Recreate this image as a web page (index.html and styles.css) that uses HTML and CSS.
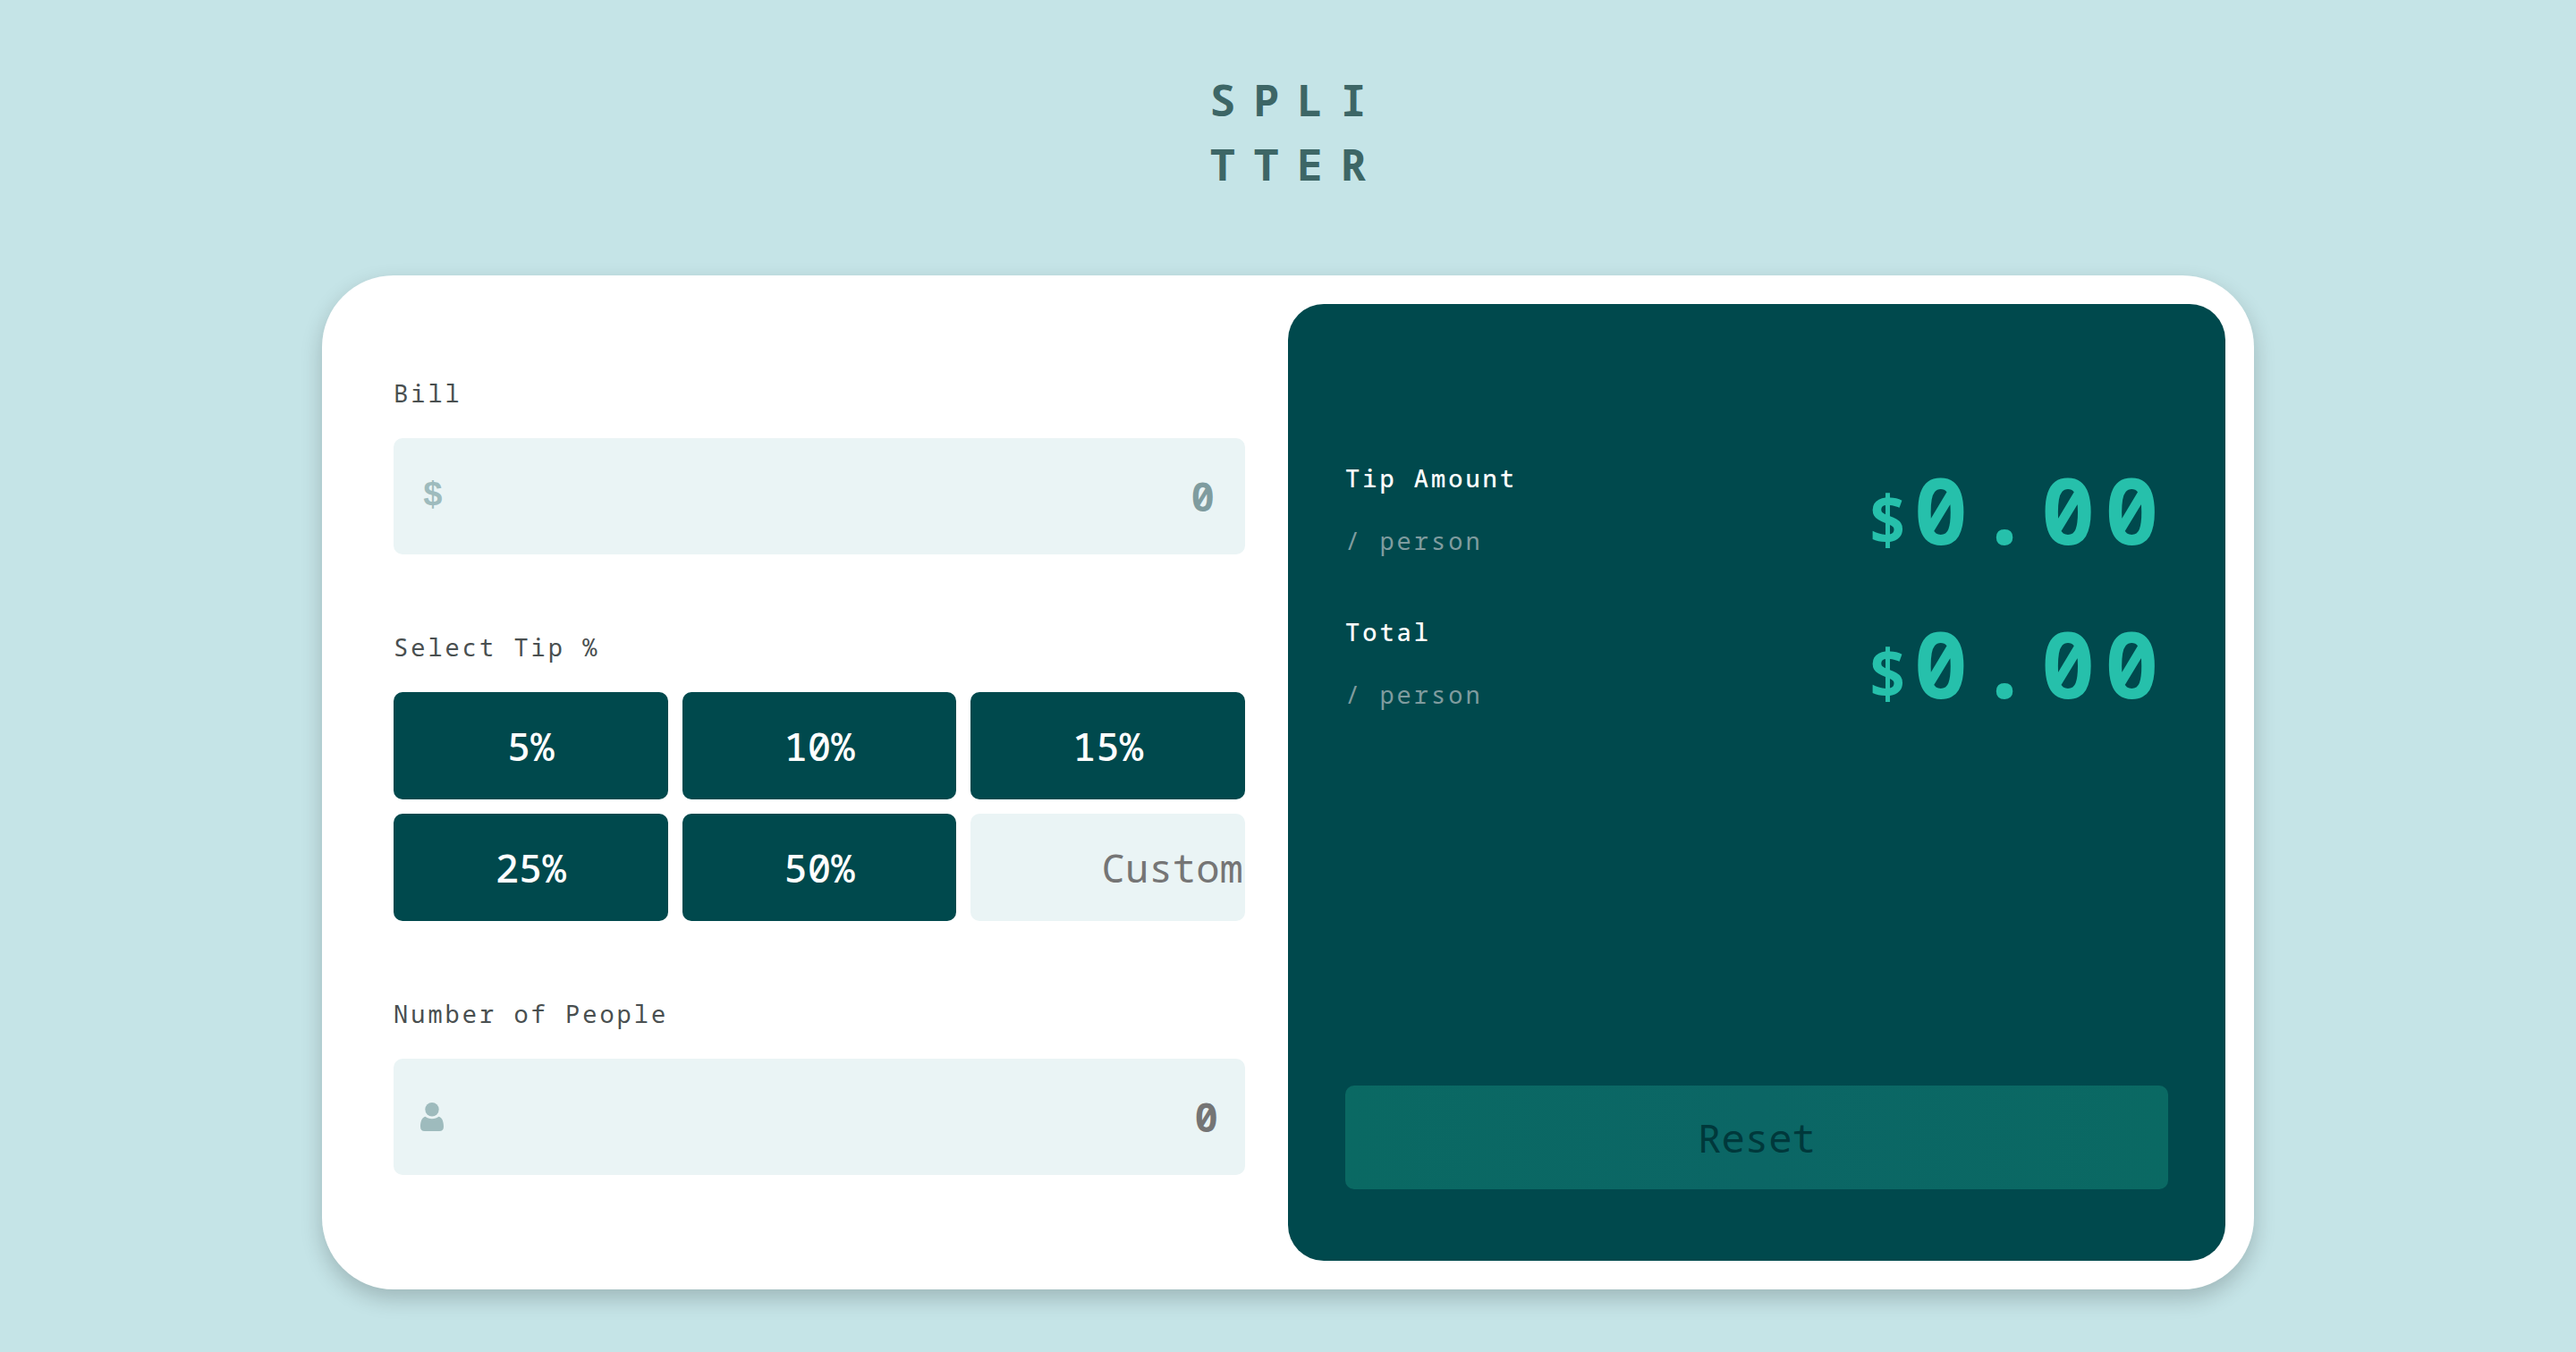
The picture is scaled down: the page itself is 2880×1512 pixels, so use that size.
FILE: index.html
```html
<!DOCTYPE html>
<html lang="en">
<head>
<meta charset="utf-8">
<meta name="viewport" content="width=device-width, initial-scale=1">
<title>Splitter</title>
<link rel="stylesheet" href="styles.css">
</head>
<body>
<header class="header">
  <h1 class="logo">SPLI<br>TTER</h1>
</header>
<main class="card">
  <form class="form">
    <div class="group">
      <label class="label" for="bill">Bill</label>
      <div class="field field-money">
        <span class="dollar" aria-hidden="true">$</span>
        <input class="input" id="bill" type="text" inputmode="decimal" value="0">
      </div>
    </div>
    <fieldset class="group tips">
      <legend class="label">Select Tip %</legend>
      <div class="tip-grid">
        <button class="tip" type="button">5%</button>
        <button class="tip" type="button">10%</button>
        <button class="tip" type="button">15%</button>
        <button class="tip" type="button">25%</button>
        <button class="tip" type="button">50%</button>
        <input class="custom" type="text" inputmode="numeric" placeholder="Custom" aria-label="Custom tip">
      </div>
    </fieldset>
    <div class="group">
      <label class="label" for="people">Number of People</label>
      <div class="field">
        <svg class="person" viewBox="0 0 26 32" aria-hidden="true"><circle cx="13" cy="7.7" r="7.7"/><path d="M5.600 15.800C7.200 17.400 10 18.200 13 18.200S18.800 17.400 20.400 15.800C24.600 16.600 26 22 26 27C26 30.300 24.400 32 21.200 32H4.800C1.600 32 0 30.300 0 27C0 22 1.400 16.600 5.600 15.800Z"/></svg>
        <input class="input" id="people" type="text" inputmode="numeric" placeholder="0">
      </div>
    </div>
  </form>
  <section class="panel">
    <div class="results">
      <div class="result">
        <div class="caption"><p class="name">Tip Amount</p><p class="unit">/ person</p></div>
        <output class="amount"><span class="currency">$</span>0.00</output>
      </div>
      <div class="result">
        <div class="caption"><p class="name">Total</p><p class="unit">/ person</p></div>
        <output class="amount"><span class="currency">$</span>0.00</output>
      </div>
    </div>
    <button class="reset" type="button" disabled>Reset</button>
  </section>
</main>
</body>
</html>
```
FILE: styles.css
```css
* { box-sizing: border-box; margin: 0; padding: 0; }

body {
  min-height: 100vh;
  background: #c5e4e7;
  color: #494f50;
  font-family: "Noto Sans Mono", "DejaVu Sans Mono", monospace;
}

.header { padding: 76px 0 88px; }

.logo {
  padding-left: 20px;
  text-align: center;
  font-size: 48px;
  font-weight: bold;
  line-height: 72px;
  letter-spacing: 20px;
  color: #3d6666;
}

.card {
  display: grid;
  grid-template-columns: 1fr 1fr;
  width: 75%;
  margin: 0 auto 70px;
  padding: 32px;
  border-radius: 80px;
  background: #fff;
  box-shadow: 0 10px 24px rgba(0, 0, 0, 0.2);
}

.form {
  display: flex;
  flex-direction: column;
  gap: 84px;
  padding: 80px 48px 96px;
}

.group { border: 0; min-width: 0; }

.label {
  display: block;
  margin-bottom: 30px;
  font-size: 27px;
  line-height: 40px;
  letter-spacing: 3px;
}

.field {
  display: flex;
  align-items: center;
  height: 130px;
  padding: 0 30px;
  border-radius: 10px;
  background: #eaf4f5;
}

.field-money { padding-right: 34px; }

.dollar {
  width: 28px;
  text-align: center;
  font: bold 38px/44px "Liberation Mono", monospace;
  color: #9ebbbd;
}

.person { width: 26px; height: 32px; fill: #9ebbbd; }

.input, .custom {
  border: 0;
  outline: 0;
  min-width: 0;
  background: transparent;
  color: #7f9c9f;
  text-align: right;
  font-family: inherit;
  font-size: 44px;
}

.input { flex: 1; height: 100%; font-weight: bold; }
.input::placeholder, .custom::placeholder { color: #757575; opacity: 1; }

.tip-grid {
  display: grid;
  grid-template-columns: repeat(3, 1fr);
  grid-auto-rows: 120px;
  gap: 16px;
}

.tip, .custom { border: 0; border-radius: 10px; }

.tip {
  background: #00494d;
  color: #fff;
  font: 500 44px "Noto Sans Mono", "DejaVu Sans Mono", monospace;
}

.custom { width: 100%; padding-right: 2px; background: #eaf4f5; }

.panel {
  display: flex;
  flex-direction: column;
  justify-content: space-between;
  padding: 160px 64px 80px;
  border-radius: 40px;
  background: #00494d;
}

.results { display: flex; flex-direction: column; gap: 32px; }

.result { display: flex; align-items: center; justify-content: space-between; }

.caption { font-size: 27px; line-height: 70px; letter-spacing: 3px; }
.name { color: #fff; font-weight: 500; }
.unit { color: #7f9c9f; }

.amount {
  font-size: 102px;
  font-weight: bold;
  line-height: 140px;
  letter-spacing: 10px;
  color: #26c0ab;
}

.currency { font-size: 76px; line-height: 1; letter-spacing: 6px; }

.reset {
  height: 116px;
  border: 0;
  border-radius: 10px;
  background: linear-gradient(90deg, #0a6963, #0b6665, #0a6963);
  color: #00383b;
  font-family: inherit;
  font-size: 44px;
}
```
